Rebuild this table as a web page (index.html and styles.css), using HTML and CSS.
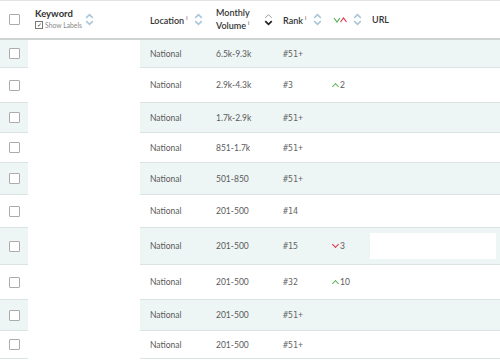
FILE: index.html
```html
<!DOCTYPE html>
<html lang="en">
  <head>
    <meta charset="UTF-8" />
    <title>Keyword Rankings</title>
    <link rel="stylesheet" href="styles.css">
  </head>
  <body>
    <div class="table">
      <div class="head">
        <div class="cell check"><span class="box"></span></div>
        <div class="cell keyword-head">
          <div class="kw-stack">
            <span class="kw-title">Keyword</span>
            <span class="show-labels"><span class="mini-box">&#10003;</span>Show Labels</span>
          </div>
          <svg class="sort" viewBox="0 0 8 12"><polyline points="1,4.5 4,1.5 7,4.5"/><polyline points="1,7.5 4,10.5 7,7.5"/></svg>
        </div>
        <div class="cell">
          <span class="th">Location<sup>i</sup></span>
          <svg class="sort" viewBox="0 0 8 12"><polyline points="1,4.5 4,1.5 7,4.5"/><polyline points="1,7.5 4,10.5 7,7.5"/></svg>
        </div>
        <div class="cell">
          <span class="th two">Monthly<br />Volume<sup>i</sup></span>
          <svg class="sort active" viewBox="0 0 8 12"><polyline class="off" points="1,4.5 4,1.5 7,4.5"/><polyline points="1,7.5 4,10.5 7,7.5"/></svg>
        </div>
        <div class="cell">
          <span class="th">Rank<sup>i</sup></span>
          <svg class="sort" viewBox="0 0 8 12"><polyline points="1,4.5 4,1.5 7,4.5"/><polyline points="1,7.5 4,10.5 7,7.5"/></svg>
        </div>
        <div class="cell">
          <svg class="trend-icon" viewBox="0 0 14 8"><polyline class="g" points="0.5,2 3.5,6 6.5,2"/><polyline class="r" points="7,6 10,2 13,6"/></svg>
          <svg class="sort" viewBox="0 0 8 12"><polyline points="1,4.5 4,1.5 7,4.5"/><polyline points="1,7.5 4,10.5 7,7.5"/></svg>
        </div>
        <div class="cell"><span class="th">URL</span></div>
      </div>

      <div class="row stripe h28">
        <div class="cell check"><span class="box"></span></div>
        <div class="cell kw"></div>
        <div class="cell">National</div>
        <div class="cell">6.5k-9.3k</div>
        <div class="cell rank">#51+</div>
        <div class="cell"></div>
        <div class="cell"></div>
      </div>
      <div class="row h35">
        <div class="cell check"><span class="box"></span></div>
        <div class="cell kw"></div>
        <div class="cell">National</div>
        <div class="cell">2.9k-4.3k</div>
        <div class="cell rank">#3</div>
        <div class="cell"><span class="up"></span>2</div>
        <div class="cell"></div>
      </div>
      <div class="row stripe h30">
        <div class="cell check"><span class="box"></span></div>
        <div class="cell kw"></div>
        <div class="cell">National</div>
        <div class="cell">1.7k-2.9k</div>
        <div class="cell rank">#51+</div>
        <div class="cell"></div>
        <div class="cell"></div>
      </div>
      <div class="row h30">
        <div class="cell check"><span class="box"></span></div>
        <div class="cell kw"></div>
        <div class="cell">National</div>
        <div class="cell">851-1.7k</div>
        <div class="cell rank">#51+</div>
        <div class="cell"></div>
        <div class="cell"></div>
      </div>
      <div class="row stripe h32">
        <div class="cell check"><span class="box"></span></div>
        <div class="cell kw"></div>
        <div class="cell">National</div>
        <div class="cell">501-850</div>
        <div class="cell rank">#51+</div>
        <div class="cell"></div>
        <div class="cell"></div>
      </div>
      <div class="row h33">
        <div class="cell check"><span class="box"></span></div>
        <div class="cell kw"></div>
        <div class="cell">National</div>
        <div class="cell">201-500</div>
        <div class="cell rank">#14</div>
        <div class="cell"></div>
        <div class="cell"></div>
      </div>
      <div class="row stripe h37">
        <div class="cell check"><span class="box"></span></div>
        <div class="cell kw"></div>
        <div class="cell">National</div>
        <div class="cell">201-500</div>
        <div class="cell rank">#15</div>
        <div class="cell"><span class="down"></span>3</div>
        <div class="cell url"><span class="url-blank"></span></div>
      </div>
      <div class="row h35">
        <div class="cell check"><span class="box"></span></div>
        <div class="cell kw"></div>
        <div class="cell">National</div>
        <div class="cell">201-500</div>
        <div class="cell rank">#32</div>
        <div class="cell"><span class="up"></span>10</div>
        <div class="cell"></div>
      </div>
      <div class="row stripe h31">
        <div class="cell check"><span class="box"></span></div>
        <div class="cell kw"></div>
        <div class="cell">National</div>
        <div class="cell">201-500</div>
        <div class="cell rank">#51+</div>
        <div class="cell"></div>
        <div class="cell"></div>
      </div>
      <div class="row h28">
        <div class="cell check"><span class="box"></span></div>
        <div class="cell kw"></div>
        <div class="cell">National</div>
        <div class="cell">201-500</div>
        <div class="cell rank">#51+</div>
        <div class="cell"></div>
        <div class="cell"></div>
      </div>
    </div>
  </body>
</html>
```

FILE: styles.css
```css
* {
  margin: 0;
  padding: 0;
  box-sizing: border-box;
}

body {
  font-family: Lato, "Open Sans", sans-serif;
  background: #fff;
  color: #5a5a5a;
  font-size: 8.5px;
}

.table {
  width: 500px;
  border-top: 1px solid #e2e4e4;
}

.head,
.row {
  display: grid;
  grid-template-columns: 28px 112px 66px 67px 50px 39px 1fr;
}

.head {
  height: 39px;
  border-bottom: 2px solid #cdd2d2;
}

.head .cell {
  display: flex;
  align-items: center;
  padding-left: 10px;
  color: #333;
}

.row .cell {
  display: flex;
  align-items: center;
  padding-left: 10px;
  border-bottom: 1px solid #dbe3e3;
}

.row.stripe .cell {
  background: #eef5f5;
}

.row .cell.kw {
  background: #fff;
  border-bottom-color: #fff;
}

.cell.check,
.head .cell.check {
  padding-left: 0;
  justify-content: center;
}

.h28 { height: 28px; }
.h30 { height: 30px; }
.h31 { height: 31px; }
.h32 { height: 32px; }
.h33 { height: 33px; }
.h35 { height: 35px; }
.h37 { height: 37px; }

.box {
  display: block;
  width: 11px;
  height: 11px;
  border: 1px solid #ababab;
  border-radius: 1px;
  background: #fff;
}

.head .cell.keyword-head {
  padding-left: 7px;
  gap: 3px;
}

.kw-stack {
  display: flex;
  flex-direction: column;
  gap: 2px;
  margin-top: -1px;
}

.kw-title {
  font-weight: 700;
  font-size: 9.5px;
  color: #333;
  line-height: 10px;
}

.show-labels {
  display: flex;
  align-items: center;
  gap: 2px;
  font-size: 6.8px;
  color: #8a8a8a;
}

.mini-box {
  display: inline-flex;
  align-items: center;
  justify-content: center;
  width: 8px;
  height: 8px;
  border: 1px solid #777;
  font-size: 6px;
  color: #333;
  line-height: 1;
}

.th {
  font-size: 9px;
  font-weight: 600;
  color: #333;
  line-height: 10px;
}

.th sup {
  font-size: 5px;
  font-weight: 400;
  margin-left: 2px;
  vertical-align: 4px;
}

.sort {
  width: 9px;
  height: 13px;
  margin-left: 7px;
  fill: none;
  stroke: #a9c6da;
  stroke-width: 1.5;
}

.keyword-head .sort {
  margin-left: 0;
}

.sort.active {
  margin-left: 14px;
  stroke: #222;
  stroke-width: 1.6;
}

.sort.active .off {
  stroke: #999;
  stroke-width: 0.9;
}

.trend-icon {
  width: 15px;
  height: 8px;
  fill: none;
  stroke-width: 1.1;
}

.trend-icon .g {
  stroke: #4cae4c;
}

.trend-icon .r {
  stroke: #e0304a;
}

.trend-icon + .sort {
  margin-left: 5px;
}

.rank {
  font-family: "DejaVu Sans Mono", monospace;
  font-size: 8.3px;
  color: #666;
}

.up,
.down {
  display: inline-block;
  width: 5px;
  height: 5px;
  margin-right: 2px;
  border-left: 1px solid;
  border-top: 1px solid;
}

.up {
  border-color: #5cb85c;
  transform: rotate(45deg);
  margin-top: 2px;
}

.down {
  border-color: #e0304a;
  transform: rotate(225deg);
  margin-top: -4px;
}

.cell.url {
  padding-left: 8px;
}

.url-blank {
  display: block;
  width: 126px;
  height: 26px;
  background: #fff;
}
```
